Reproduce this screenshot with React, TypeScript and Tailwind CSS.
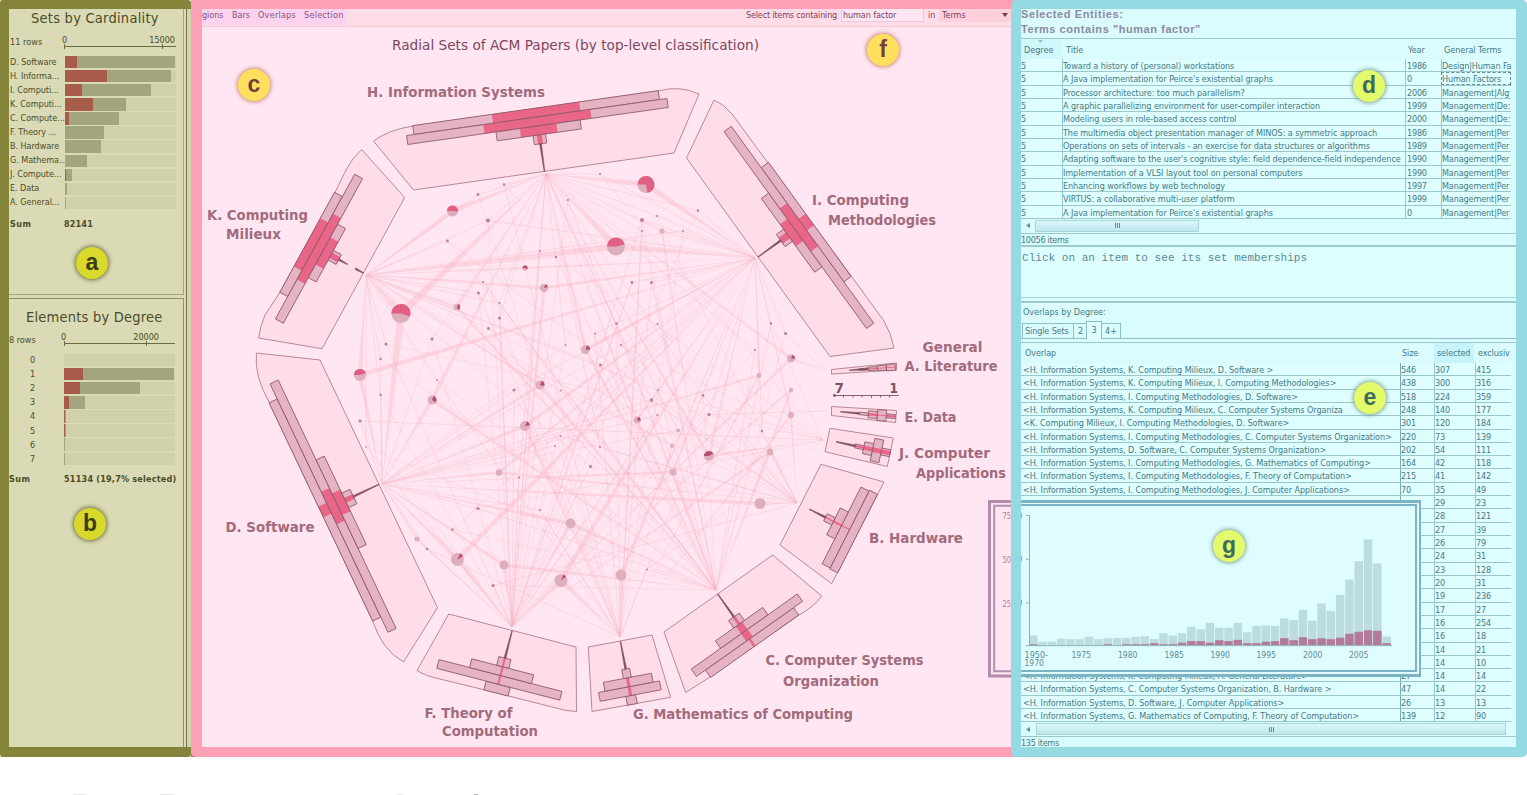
import React from 'react';

type Bin = [length: number, selected: number];
type Sector = {
  id: string;
  x: number;
  y: number;
  angle: number;
  outline: string;
  bins: Bin[];
  stem: [from: number, to: number][];
};

const SECTORS: Sector[] = [
  { id: 'H', x: 544.5, y: 171.5, angle: -8.1, outline: 'M373.5 141Q388 130 413 126L658 91Q680 85 699 94L674 153L413.5 190Z', bins: [[248, 88], [263, 108], [85, 37], [12.5, 5]], stem: [[0, 28]] },
  { id: 'I', x: 758, y: 257, angle: 54.1, outline: 'M714 100Q724 104 732 114L768 163L852 277L884 321Q891 333 894 348L830 356.5L686.5 158Z', bins: [[141, 14], [243, 53], [91, 27], [15, 7]], stem: [[0, 28]] },
  { id: 'K', x: 363.3, y: 273, angle: -61.3, outline: 'M361.7 149.5Q352 158 346 170L334.7 193L279.5 293L265 315Q260 327 258.5 338L322 348.7L404.7 197.5Z', bins: [[114, 55], [165, 75], [61, 31], [11, 6]], stem: [[0, 9], [18, 28]] },
  { id: 'D', x: 378.7, y: 484.5, angle: -115.4, outline: 'M256.4 353Q254 376 269.4 402.7L372.7 621Q382 650 403.5 662L437.5 607.7L320 360Z', bins: [[241.5, 12], [275, 36], [98, 24], [16, 5]], stem: [[0, 28]] },
  { id: 'F', x: 512, y: 631, angle: 194.5, outline: 'M448.7 614L417 670.5Q425 676 440 679L485 690L566 710.5L576.5 711.5L576 647Z', bins: [[25, 0], [127, 2], [64, 2], [12.5, 2]], stem: [[0, 28]] },
  { id: 'G', x: 620.5, y: 641.5, angle: 169.3, outline: 'M588.3 647L592 711.5L670.7 697.3L652 635Z', bins: [[10, 0], [62, 3], [49, 3], [8, 0]], stem: [[0, 28]] },
  { id: 'C', x: 717.7, y: 594, angle: 144.7, outline: 'M664 632L685.7 692.5L710 677L799 615Q814 607 821.7 596L772.7 555Z', bins: [[108, 2.5], [130, 8], [58, 8], [13, 3]], stem: [[0, 28]] },
  { id: 'B', x: 800.5, y: 504.7, angle: 116.8, outline: 'M821 464.3L884 482L831.7 583.7L780 545Z', bins: [[88, 0], [86, 1], [30, 2], [8, 1.5]], stem: [[10, 28]] },
  { id: 'J', x: 827.5, y: 440, angle: 102, outline: 'M830 428.3L893.3 438L887.3 466.5L825 451.7Z', bins: [[7, 4], [23, 4.5], [12, 4], [4, 2]], stem: [[9, 28]] },
  { id: 'E', x: 831.5, y: 411, angle: 95, outline: 'M831.5 406.5L896.5 410.5L895.5 422.5L831.5 415.5Z', bins: [[4, 2], [11, 1], [7, 2.5], [2.5, 0]], stem: [[9, 28]] },
  { id: 'A', x: 831.5, y: 371.5, angle: 86, outline: 'M831.5 369.5L896.5 363L896.5 370L831.5 374Z', bins: [[6.5, 0.8], [5, 0.8], [3.5, 1], [1.5, 0]], stem: [[18, 36]] },
];

const TIP: Record<string, [number, number]> = {
  H: [546, 174], I: [755, 258], K: [366, 275], D: [382, 484], F: [512, 627],
  G: [620, 637], C: [716, 590], B: [797, 503], J: [823, 440], E: [826, 411], A: [826, 371],
};

/** x, y, radius, selected share, member sets, link width */
type Bubble = [number, number, number, number, string, number];

const BUBBLES: Bubble[] = [
  [646, 184.5, 8.5, 0.72, 'HI', 6],
  [616, 246.5, 9, 0.46, 'HKI', 7],
  [401, 313.5, 9.5, 0.55, 'KHD', 8],
  [360, 375, 6, 0.45, 'KDI', 4.5],
  [452.5, 211, 5.5, 0.52, 'HK', 5],
  [585.5, 349.5, 4.5, 0.2, 'HIC', 3.5],
  [544, 288, 4, 0.15, 'KIF', 3],
  [525, 268, 2.6, 0.6, 'KI', 2],
  [457, 307, 3.2, 0.4, 'KHC', 2.5],
  [432, 400, 4.5, 0.28, 'HDC', 3.5],
  [540, 385, 4.5, 0.22, 'KCD', 3],
  [525, 426, 5, 0.16, 'DIG', 3.5],
  [499, 472.5, 3.2, 0, 'DIB', 2.5],
  [457.5, 559.5, 6.5, 0.1, 'DFI', 5],
  [504, 565, 4.5, 0, 'FCD', 3.5],
  [570.5, 523.5, 5, 0, 'DCF', 4],
  [561, 580.5, 6.5, 0.08, 'FIG', 5],
  [621, 575, 5.5, 0, 'GI', 3.5],
  [760, 503.5, 5.5, 0, 'DB', 4],
  [709, 456, 5, 0.42, 'IHJ', 3],
  [637, 420, 3.5, 0.25, 'HCI', 2.5],
  [673, 472, 3.5, 0, 'DCI', 2.5],
  [770, 452, 3.4, 0, 'BCF', 2.5],
  [791, 358.5, 4, 0.2, 'HFA', 2.5],
  [791, 415, 3, 0, 'GIB', 2],
  [791, 390, 2.2, 0, 'FC', 2],
  [759, 375.5, 2.4, 0, 'IGD', 2],
  [417, 539, 2.5, 0, 'DF', 2],
  [662, 231, 2.6, 0, 'HIC', 1.8],
  [678, 430.5, 2, 0, 'HD', 1.2],
  [672, 446, 2, 0, 'KG', 1.2],
];

/** x, y, radius, member sets */
const DOTS: [number, number, number, string][] = [
  [488, 220.5, 2, 'KHI'], [642, 220, 2, 'IFG'], [478, 194.5, 1.4, 'HK'], [504, 184.5, 1.2, 'HG'],
  [568, 200, 1.1, 'HC'], [600, 174, 1.1, 'HI'], [447.5, 241, 1.4, 'KB'], [698, 210.5, 1.2, 'HI'],
  [642, 231, 1, 'HG'], [683, 231, 1, 'KI'], [657, 216, 1, 'HI'], [540, 251, 1, 'HF'],
  [556, 257, 1.2, 'KC'], [483, 282, 1, 'KC'], [478.5, 293, 1.5, 'KG'], [499.5, 303, 1, 'KHF'],
  [499.5, 318, 1.6, 'HF'], [488.5, 328.5, 1.4, 'KC'], [432, 339, 1.6, 'HD'], [386, 344, 1.5, 'KF'],
  [380.5, 359, 1.2, 'KD'], [380.5, 395, 1.2, 'KD'], [437, 380, 0.9, 'KG'], [514, 390, 1.5, 'DIF'],
  [560.5, 390.5, 1, 'KC'], [565.5, 345, 0.9, 'HD'], [595, 333.5, 1, 'GI'], [600.5, 365, 1.5, 'KB'],
  [632, 282.5, 1.4, 'IF'], [651.5, 282.5, 1.5, 'IG'], [616.5, 323.5, 1.2, 'HC'], [657.5, 324, 1, 'ID'],
  [621, 345, 1, 'HB'], [771, 323.5, 1.2, 'IC'], [785.5, 333.5, 1.5, 'IA'], [755, 350, 1, 'HC'],
  [703, 395.5, 1.3, 'HB'], [709, 414.5, 1.6, 'IFE'], [651.5, 400, 1.7, 'HCD'], [657.5, 415, 1, 'FD'],
  [658, 390, 0.9, 'KC'], [762, 431, 1.2, 'IB'], [360, 421, 1.6, 'DJ'], [366, 447, 0.8, 'KF'],
  [560.5, 436, 1, 'DB'], [590.5, 466.5, 1.6, 'KC'], [519, 477.5, 1.1, 'FH'], [478, 508.5, 1.6, 'DC'],
  [452.5, 529.5, 1.2, 'DI'], [427, 549, 1.3, 'DG'], [493, 585.5, 1.5, 'FB'], [540, 510, 1, 'DG'],
  [600, 447, 1, 'HF'], [555, 446, 0.9, 'DI'], [647, 569.5, 1, 'GC'],
];

const MINOR_SETS = ['F', 'C', 'G', 'B', 'F', 'J', 'C'];

const LABELS: [number, number, number, string][] = [
  [367, 97, 178, 'H. Information Systems'],
  [207, 219.5, 101, 'K. Computing'],
  [226, 239, 55, 'Milieux'],
  [812, 204.5, 97, 'I. Computing'],
  [828, 224.5, 108, 'Methodologies'],
  [922.5, 352, 60, 'General'],
  [904.5, 371, 93, 'A. Literature'],
  [904.5, 421.5, 52, 'E. Data'],
  [899, 458, 91, 'J. Computer'],
  [916, 478, 90, 'Applications'],
  [869, 543, 94, 'B. Hardware'],
  [225.5, 531.5, 89, 'D. Software'],
  [424.5, 718, 88, 'F. Theory of'],
  [442, 736, 96, 'Computation'],
  [633, 719, 220, 'G. Mathematics of Computing'],
  [765.5, 664.5, 158, 'C. Computer Systems'],
  [783, 685.5, 96, 'Organization'],
];

function wedge(tip: [number, number], x: number, y: number, width: number) {
  const dx = x - tip[0];
  const dy = y - tip[1];
  const d = Math.hypot(dx, dy) || 1;
  const ox = (-dy / d) * (width / 2);
  const oy = (dx / d) * (width / 2);
  return `M${tip[0]} ${tip[1]}L${x + ox} ${y + oy}L${x - ox} ${y - oy}Z`;
}

function slice(x: number, y: number, r: number, share: number) {
  const start = share > 0.4 ? -Math.PI : -Math.PI / 2 + 0.4;
  const end = start + share * Math.PI * 2;
  const large = share > 0.5 ? 1 : 0;
  return `M${x} ${y}L${x + r * Math.cos(start)} ${y + r * Math.sin(start)}A${r} ${r} 0 ${large} 1 ${x + r * Math.cos(end)} ${y + r * Math.sin(end)}Z`;
}

function SectorShape({ s }: { s: Sector }) {
  return (
    <g>
      <path d={s.outline} fill="#ffdde8" stroke="#b07d8b" strokeWidth="0.9" />
      <g transform={`translate(${s.x} ${s.y}) rotate(${s.angle})`}>
        {s.bins.map(([len, sel], i) => {
          const top = -64 + i * 9;
          return (
            <g key={i}>
              <rect x={-len / 2} y={top} width={len} height={9} fill="#e5b3c3" />
              {sel > 0 && <rect x={-sel / 2} y={top} width={sel} height={9} fill="#e96689" />}
              <rect x={-len / 2} y={top} width={len} height={9} fill="none" stroke="#8a5766" strokeWidth="0.8" />
            </g>
          );
        })}
        {s.stem.map(([a, b], i) => (
          <path key={i} d={`M-0.3 ${-a}L0.3 ${-a}L0.9 ${-b}L-0.9 ${-b}Z`} fill="#82505f" stroke="#82505f" strokeWidth="0.6" />
        ))}
      </g>
    </g>
  );
}

function RadialSets() {
  return (
    <svg className="block h-[720px] w-[809px] shrink-0" viewBox="202 27 809 720" fontFamily="'DejaVu Sans', sans-serif">
      <text x="392" y="50" fontSize="14" textLength="367" lengthAdjust="spacingAndGlyphs" fill="#7d4760">
        Radial Sets of ACM Papers (by top-level classification)
      </text>
      <g fill="#fbb9c5">
        {BUBBLES.map(([x, y, , , sets, w]) =>
          sets.split('').map((k) => <path key={`${x}${y}${k}`} d={wedge(TIP[k], x, y, w)} opacity="0.42" />),
        )}
      </g>
      <g stroke="#f9b3c0" strokeWidth="0.8">
        {DOTS.map(([x, y, , sets], i) =>
          (sets + MINOR_SETS[i % MINOR_SETS.length]).split('').map((k, j) => (
            <line key={`${x}-${y}-${j}`} x1={TIP[k][0]} y1={TIP[k][1]} x2={x} y2={y} opacity={j === sets.length ? 0.3 : 0.42} />
          )),
        )}
      </g>
      {DOTS.map(([x, y, r]) => (
        <circle key={`${x}-${y}`} cx={x} cy={y} r={r} fill="#b9809a" />
      ))}
      {BUBBLES.map(([x, y, r, share]) => (
        <g key={`${x}-${y}`}>
          <circle cx={x} cy={y} r={r} fill="#dfaebd" />
          {share > 0 && <path d={slice(x, y, r, share)} fill={r > 5 && share > 0.2 ? '#e05f82' : '#b84f70'} />}
        </g>
      ))}
      {SECTORS.map((s) => (
        <SectorShape key={s.id} s={s} />
      ))}
      <g fill="#a26b7b" fontSize="14" fontWeight="bold">
        {LABELS.map(([x, y, w, t]) => (
          <text key={t} x={x} y={y} textLength={w} lengthAdjust="spacingAndGlyphs">
            {t}
          </text>
        ))}
      </g>
      <g fill="#82505f" fontSize="14.5" fontWeight="bold">
        <text x="834.5" y="392.5" textLength="9.5" lengthAdjust="spacingAndGlyphs">7</text>
        <text x="889.5" y="392.5" textLength="8.5" lengthAdjust="spacingAndGlyphs">1</text>
      </g>
      <path d="M834 395.5H899M843.5 395v2.5M853 395v2.5M862 395v2.5M871.500 395v3M880.500 395v2.500M889.500 395v2.500" stroke="#82505f" strokeWidth="0.9" />
      <circle cx="834.5" cy="395.5" r="1.4" fill="#82505f" />
      <path d="M1012 501.500H989.500V676H1012" fill="none" stroke="#b48cad" strokeWidth="3" />
      <path d="M1012 505.700H994.200V671.300H1012" fill="none" stroke="#b48cad" strokeWidth="2" />
      <g fill="#bb7795" fontSize="8">
        <text x="1002.500" y="519" textLength="8.500" lengthAdjust="spacingAndGlyphs">75</text>
        <text x="1002.500" y="562.500" textLength="8.500" lengthAdjust="spacingAndGlyphs">50</text>
        <text x="1002.500" y="606.500" textLength="8.500" lengthAdjust="spacingAndGlyphs">25</text>
      </g>
    </svg>
  );
}

function Badge({ letter, place, tone }: { letter: string; place: string; tone: string }) {
  return (
    <div className={`absolute flex h-8 w-8 items-center justify-center rounded-full pb-0.5 font-['Liberation_Sans',sans-serif] text-[23px] leading-none font-bold ${place} ${tone}`}>
      {letter}
    </div>
  );
}

const OLIVE_BADGE = 'bg-[#d9d92b] text-[#3d3d12] shadow-[0_0_4px_1px_#6d6e3c]';
const PINK_BADGE = 'bg-[#ffdf5e] text-[#733f3c] shadow-[0_0_4px_1px_#c98b78]';
const BLUE_BADGE = 'bg-[#e2fa6c] text-[#3c6a5d] shadow-[0_0_4px_1px_#7fa08f]';

const CARDINALITY: [string, number, number][] = [
  ['D. Software', 110, 12], ['H. Informa...', 106.5, 42], ['I. Computi...', 86.5, 17], ['K. Computi...', 61.5, 28.5],
  ['C. Compute...', 54, 4], ['F. Theory ...', 39.5, 0.8], ['B. Hardware', 37, 0.8], ['G. Mathema...', 22.5, 0.8],
  ['J. Compute...', 7.5, 1], ['E. Data', 2, 0.5], ['A. General...', 1.5, 0.7],
];

const DEGREES: [string, number, number][] = [
  ['0', 0, 0], ['1', 110, 19], ['2', 76, 16], ['3', 21, 5], ['4', 1.8, 0.6], ['5', 1, 0.6], ['6', 0.8, 0], ['7', 0.8, 0],
];

function Bar({ total, selected }: { total: number; selected: number }) {
  return (
    <div className="flex h-[12.400px] w-[111px] shrink-0 bg-[#d0d1ab]">
      <div className="h-full bg-[#a95b49]" style={{ width: selected }} />
      <div className="h-full bg-[#a3a57f]" style={{ width: total - selected }} />
    </div>
  );
}

function LeftPanel() {
  return (
    <aside className="relative flex h-[757px] w-[191px] shrink-0 flex-col overflow-hidden rounded-[3px] border-y-[9px] border-b-[10px] border-l-[9px] border-[#84853a] bg-[#dadbb6] font-['DejaVu_Sans_Condensed','DejaVu_Sans',sans-serif] text-[9px] leading-none text-[#4b4c26]">
      <div className="flex min-h-0 flex-1">
        <div className="flex w-[175px] shrink-0 flex-col">
          <section className="flex h-[286px] shrink-0 flex-col border-r border-b border-[#a4a67c]">
            <h2 className="mt-px ml-[22px] h-[16px] text-[14.500px] leading-[16px] tracking-[0.250px] whitespace-nowrap">Sets by Cardinality</h2>
            <div className="mt-[10px] flex h-[20px]">
              <div className="w-[55px] pt-[2px] pl-px tracking-[0.050px]">11 rows</div>
              <div className="relative h-[11px] w-[112px] border-b border-[#6a6b42]">
                <div className="absolute bottom-px left-[-2px]">0</div>
                <div className="absolute right-[1px] bottom-px text-[9px]">15000</div>
                <div className="absolute bottom-[-3px] left-0 h-[5px] w-px bg-[#6a6b42]" />
                <div className="absolute right-[13px] bottom-[-3px] h-[5px] w-px bg-[#6a6b42]" />
              </div>
            </div>
            <div className="-mt-px flex flex-col">
              {CARDINALITY.map(([name, total, selected]) => (
                <div key={name} className="flex h-[14.100px] items-center">
                  <div className="w-[55.500px] shrink-0 pl-px tracking-[-0.060px] whitespace-nowrap">{name}</div>
                  <Bar total={total} selected={selected} />
                </div>
              ))}
            </div>
            <div className="mt-[10px] flex pl-px font-bold">
              <div className="w-[54px] tracking-[0.400px]">Sum</div>
              <div className="tracking-[0.150px]">82141</div>
            </div>
          </section>
          <section className="mt-[3px] flex min-h-0 flex-1 flex-col border-t border-r border-[#8f9168]">
            <h2 className="mt-[10px] ml-[17px] h-[16px] text-[14.500px] leading-[16px] tracking-[0.220px] whitespace-nowrap">Elements by Degree</h2>
            <div className="mt-[8px] flex h-[20px]">
              <div className="w-[55px] pt-[3px]">8 rows</div>
              <div className="relative h-[11px] w-[111px] border-b border-[#6a6b42]">
                <div className="absolute bottom-px left-[-3px]">0</div>
                <div className="absolute right-[16px] bottom-px">20000</div>
                <div className="absolute bottom-[-3px] left-0 h-[5px] w-px bg-[#6a6b42]" />
                <div className="absolute right-[28px] bottom-[-3px] h-[5px] w-px bg-[#6a6b42]" />
              </div>
            </div>
            <div className="flex flex-col">
              {DEGREES.map(([name, total, selected]) => (
                <div key={name} className="flex h-[14.100px] items-center">
                  <div className="w-[55px] shrink-0 pt-px pl-[21px]">{name}</div>
                  <Bar total={total} selected={selected} />
                </div>
              ))}
            </div>
            <div className="mt-[9px] flex font-bold whitespace-nowrap">
              <div className="w-[55px] tracking-[0.400px]">Sum</div>
              <div className="tracking-[0.210px]">51134 (19,7% selected)</div>
            </div>
          </section>
        </div>
        <div className="ml-[2px] w-px bg-[#74764c]" />
        <div className="flex-1 bg-[#d5d3ae]" />
      </div>
      <Badge letter="a" place="left-[67px] top-[238px]" tone={OLIVE_BADGE} />
      <Badge letter="b" place="left-[65px] top-[499px]" tone={OLIVE_BADGE} />
    </aside>
  );
}

function CenterPanel() {
  return (
    <div className="flex h-[757px] w-[820px] shrink-0 bg-[#84853a]">
      <main className="relative flex h-[757px] w-[820px] flex-col overflow-hidden rounded-bl-[5px] border-t-[9px] border-b-[10px] border-l-[11px] border-[#fca0b6] bg-[#ffe6f2] font-['DejaVu_Sans_Condensed','DejaVu_Sans',sans-serif] text-[9px] leading-none text-[#7a4560]">
        <div className="flex h-[18px] shrink-0 border-b border-[#fdc8d4] bg-[#ffdde8]">
          <nav className="flex h-[16px] w-[145px] shrink-0 bg-[#fcd3ee] leading-[12px] tracking-[-0.050px] text-[#875180]">
            <span className="w-[30px]">gions</span>
            <span className="w-[26px]">Bars</span>
            <span className="w-[46px] tracking-[0.250px]">Overlaps</span>
            <span className="tracking-[0.250px]">Selection</span>
          </nav>
          <form className="ml-auto flex leading-[12px] whitespace-nowrap">
            <label className="w-[95px] tracking-[-0.180px]">Select items containing</label>
            <span className="h-[13px] w-[83px] border-r border-b border-l border-[#efc6dc] bg-[#ffe6f2] pl-px tracking-[-0.100px]">human factor</span>
            <span className="w-[15px] pl-1">in</span>
            <span className="flex h-[13px] w-[72px] justify-between bg-[#fdd0dc] pr-[3px] pl-[3px]">
              Terms
              <svg className="mt-1 h-[4px] w-[6px]" viewBox="0 0 6 4"><path d="M0 0H6L3 4Z" fill="#6b3a50" /></svg>
            </span>
          </form>
        </div>
        <RadialSets />
        <Badge letter="c" place="left-[36px] top-[60px]" tone={PINK_BADGE} />
        <Badge letter="f" place="left-[665px] top-[25px]" tone={PINK_BADGE} />
      </main>
    </div>
  );
}

const ENTITIES: [string, string, string][] = [
  ['Toward a history of (personal) workstations', '1986', 'Design|Human Fa'],
  ["A Java implementation for Peirce's existential graphs", '0', 'Human Factors'],
  ['Processor architecture: too much parallelism?', '2006', 'Management|Alg'],
  ['A graphic parallelizing environment for user-compiler interaction', '1999', 'Management|De:'],
  ['Modeling users in role-based access control', '2000', 'Management|De:'],
  ['The multimedia object presentation manager of MINOS: a symmetric approach', '1986', 'Management|Per'],
  ['Operations on sets of intervals - an exercise for data structures or algorithms', '1989', 'Management|Per'],
  ["Adapting software to the user's cognitive style: field dependence-field independence", '1990', 'Management|Per'],
  ['Implementation of a VLSI layout tool on personal computers', '1990', 'Management|Per'],
  ['Enhancing workflows by web technology', '1997', 'Management|Per'],
  ['VIRTUS: a collaborative multi-user platform', '1999', 'Management|Per'],
  ["A Java implementation for Peirce's existential graphs", '0', 'Management|Per'],
];

const OVERLAPS: [string, string, string, string][] = [
  ['<H. Information Systems, K. Computing Milieux, D. Software >', '546', '307', '415'],
  ['<H. Information Systems, K. Computing Milieux, I. Computing Methodologies>', '438', '300', '316'],
  ['<H. Information Systems, I. Computing Methodologies, D. Software>', '518', '224', '359'],
  ['<H. Information Systems, K. Computing Milieux, C. Computer Systems Organiza', '248', '140', '177'],
  ['<K. Computing Milieux, I. Computing Methodologies, D. Software>', '301', '120', '184'],
  ['<H. Information Systems, I. Computing Methodologies, C. Computer Systems Organization>', '220', '73', '139'],
  ['<H. Information Systems, D. Software, C. Computer Systems Organization>', '202', '54', '111'],
  ['<H. Information Systems, I. Computing Methodologies, G. Mathematics of Computing>', '164', '42', '118'],
  ['<H. Information Systems, I. Computing Methodologies, F. Theory of Computation>', '215', '41', '142'],
  ['<H. Information Systems, I. Computing Methodologies, J. Computer Applications>', '70', '35', '49'],
  ['', '', '29', '23'], ['', '', '28', '121'], ['', '', '27', '39'], ['', '', '26', '79'], ['', '', '24', '31'],
  ['', '', '23', '128'], ['', '', '20', '31'], ['', '', '19', '236'], ['', '', '17', '27'], ['', '', '16', '254'],
  ['', '', '16', '18'], ['', '', '14', '21'], ['', '', '14', '10'],
  ['<H. Information Systems, K. Computing Milieux, A. General Literature>', '27', '14', '14'],
  ['<H. Information Systems, C. Computer Systems Organization, B. Hardware >', '47', '14', '22'],
  ['<H. Information Systems, D. Software, J. Computer Applications>', '26', '13', '13'],
  ['<H. Information Systems, G. Mathematics of Computing, F. Theory of Computation>', '139', '12', '90'],
];

/** total and selected bar heights per period */
const YEARS: [number, number][] = [
  [9.7, 1], [3.5, 0], [3.5, 0], [6.5, 0], [6, 0], [6, 0], [8.5, 0], [6, 0], [7, 1], [7.3, 0], [7.3, 1], [8.3, 1], [9, 1],
  [6.3, 2], [12, 1], [9.7, 1], [12, 2.5], [18.5, 4], [16, 4], [22.5, 2.5], [17.5, 5], [17.5, 4], [22.5, 5.3], [13, 2],
  [19.3, 2], [19.7, 3.5], [19.3, 4], [27, 7], [25.3, 5], [35.5, 8], [24.7, 6], [42, 7], [34.5, 6], [50.5, 7.5],
  [66, 11.5], [84.5, 13.5], [106.3, 15], [82.3, 14.5], [8.7, 2],
];

const YEAR_TICKS: [number, string][] = [
  [1071.5, '1975'], [1118, '1980'], [1164.5, '1985'], [1210.5, '1990'], [1256.5, '1995'], [1303, '2000'], [1349, '2005'],
];

function TimeChart() {
  return (
    <div className="absolute top-[491px] left-0 h-[177px] w-[399.500px] border-y-[3px] border-r-[2.500px] border-[#7cb2c3] bg-[#dffdfe] pt-px pr-[2px] pb-[2px]">
      <div className="h-full w-full border-y-2 border-r-2 border-[#7cb2c3]">
        <svg className="block h-full w-full" viewBox="1021 506 393.500 165" preserveAspectRatio="none" fontFamily="'DejaVu Sans Condensed', 'DejaVu Sans', sans-serif" fontSize="8.500" fill="#5b8b97">
          {YEARS.map(([h, s], i) => (
            <g key={i}>
              <rect x={1029 + i * 9.3} y={646 - h} width="8.500" height={h} fill="#bddce2" />
              <rect x={1029 + i * 9.3} y={646 - s} width="8.500" height={s} fill="#b27b9b" />
            </g>
          ))}
          <path d="M1029.500 515.500V646.500M1026 515.500H1030M1026 559.500H1030M1026 603.500H1030M1026 646.500H1392" stroke="#8ab0ba" fill="none" />
          <text x="1017.500" y="519">0</text>
          <text x="1017.500" y="562.500">0</text>
          <text x="1017.500" y="606.500">0</text>
          <text x="1024.500" y="659" textLength="23.500" lengthAdjust="spacingAndGlyphs">1950-</text>
          <text x="1024.500" y="666.500" textLength="19.500" lengthAdjust="spacingAndGlyphs">1970</text>
          {YEAR_TICKS.map(([x, t]) => (
            <text key={t} x={x} y="659" textLength="19.500" lengthAdjust="spacingAndGlyphs">{t}</text>
          ))}
        </svg>
      </div>
    </div>
  );
}

function ScrollBar({ thumb, left }: { thumb: string; left: string }) {
  return (
    <div className="flex h-[14px] shrink-0 items-center">
      <svg className="ml-[5px] h-[5px] w-[4px]" viewBox="0 0 4 5"><path d="M4 0V5L0 2.500Z" fill="#5d9199" /></svg>
      <div className={`flex h-[12px] items-center justify-center gap-px border border-[#a9d5dc] bg-linear-to-b from-[#daf8fb] to-[#bfe5ea] ${left} ${thumb}`}>
        <i className="h-[5px] w-px bg-[#5d9199]" />
        <i className="h-[5px] w-px bg-[#5d9199]" />
        <i className="h-[5px] w-px bg-[#5d9199]" />
      </div>
    </div>
  );
}

function RightPanel() {
  return (
    <div className="h-[757px] w-[516px] shrink-0 rounded-r-[5px] bg-[#fca0b6]">
      <aside className="relative flex h-[757px] w-[516px] flex-col overflow-hidden rounded-[5px] border-t-[9px] border-r-[11px] border-b-[10px] border-l-[10px] border-[#95d9e2] bg-[#dafcff] font-['DejaVu_Sans_Condensed','DejaVu_Sans',sans-serif] text-[9px] leading-none whitespace-nowrap text-[#467a85]">
        <header className="h-[30px] shrink-0 border-b border-[#9dc9d0] font-['Liberation_Sans',sans-serif] text-[11px] font-bold text-[#8c8aa2]">
          <div className="h-[11px] leading-[10px] tracking-[0.600px]">Selected Entities:</div>
          <div className="leading-[18px] tracking-[0.560px]">Terms contains "human factor"</div>
        </header>

        <div className="relative flex h-[20px] shrink-0 items-center pt-[2px]">
          <div className="-mt-[2px] flex h-[20px] w-[41px] items-center bg-[#d0f7fc] pt-[2px] pl-[3px]">Degree</div>
          <div className="w-[343px] pl-[4px]">Title</div>
          <div className="w-[36px] pl-[3px] tracking-[-0.100px]">Year</div>
          <div className="pl-[3px] tracking-[-0.050px]">General Terms</div>
          <svg className="absolute top-[1px] left-[17px] h-[3px] w-[5px]" viewBox="0 0 5 3"><path d="M0 0H5L2.500 3Z" fill="#93c4cd" /></svg>
        </div>
        <div className="flex w-[490px] shrink-0 flex-col bg-[#dffeff]">
          {ENTITIES.map(([title, year, terms], i) => (
            <div key={i} className="flex h-[13.340px] border-b border-[#98c8ce] leading-[14px]">
              <div className="w-[41px] shrink-0">5</div>
              <div className="w-[343px] shrink-0 border-l border-[#98c8ce] tracking-[-0.080px]">{title}</div>
              <div className="w-[36px] shrink-0 border-l border-[#98c8ce] pl-px tracking-[-0.200px]">{year}</div>
              <div className={`min-w-0 flex-1 border-l tracking-[-0.120px] ${i === 1 ? 'border border-dashed border-[#5d9199] leading-[12px]' : 'border-[#98c8ce]'}`}>{terms}</div>
            </div>
          ))}
        </div>
        <ScrollBar left="ml-[5px]" thumb="w-[164px]" />
        <div className="h-[14px] shrink-0 border-t border-b-2 border-[#9dc9d0] leading-[13px] tracking-[-0.300px]">10056 items</div>
        <div className="h-[51px] shrink-0 border-b border-[#aad3d8] bg-[#dffeff] pt-[5px] pl-px font-['Liberation_Mono',monospace] text-[11px] leading-[13px] tracking-[0.030px] text-[#578b95]">
          Click on an item to see its set memberships
        </div>
        <div className="mt-[3px] h-[20px] shrink-0 border-t-2 border-[#9dc9d0] pt-[5px] pl-[2px] tracking-[-0.030px]">Overlaps by Degree:</div>
        <div className="flex h-[18px] shrink-0 items-end border-b border-[#8dbec6] pl-px tracking-[-0.050px]">
          <div className="flex h-[15px] w-[52px] items-center border-t border-r border-l border-[#8dbec6] pt-[2px] pl-[2px] tracking-[-0.120px]">Single Sets</div>
          <div className="flex h-[15px] w-[12px] items-center border-t border-[#8dbec6] pt-[2px] pl-[4px]">2</div>
          <div className="-mb-px flex h-[18px] w-[16px] items-center justify-center border-x border-t border-[#8dbec6] bg-[#dffeff]">3</div>
          <div className="flex h-[15px] w-[19px] items-center justify-center border-t border-r border-[#8dbec6] pt-[2px]">4+</div>
        </div>

        <div className="mt-[3px] flex h-[21px] shrink-0 items-center border-t border-[#9dc9d0] tracking-[-0.100px]">
          <div className="w-[379px] pt-[2px] pl-[4px]">Overlap</div>
          <div className="w-[34px] pt-[2px] pl-[2px]">Size</div>
          <div className="flex h-full w-[40px] items-center bg-[#c6f4fa] pt-[2px] pl-[3px]">selected</div>
          <div className="w-[38px] pt-[2px] pl-[4px]">exclusiv</div>
        </div>
        <div className="flex w-[490px] shrink-0 flex-col bg-[#dffeff]">
          {OVERLAPS.map(([name, size, selected, exclusive], i) => (
            <div key={i} className="flex h-[13.320px] border-b border-[#98c8ce] leading-[14px] tracking-[-0.200px]">
              <div className="w-[379px] shrink-0 pl-[2px] tracking-[-0.070px]">{name}</div>
              <div className="w-[34px] shrink-0 border-l border-[#78aab2]">{size}</div>
              <div className="w-[41px] shrink-0 border-l border-[#98c8ce]">{selected}</div>
              <div className="border-l border-[#98c8ce]">{exclusive}</div>
            </div>
          ))}
        </div>
        <ScrollBar left="ml-[6px]" thumb="w-[470px]" />
        <div className="border-t border-[#9dc9d0] pt-px leading-[10px] tracking-[-0.300px]">135 items</div>

        <TimeChart />
        <Badge letter="d" place="left-[332px] top-[61px]" tone={BLUE_BADGE} />
        <Badge letter="e" place="left-[333px] top-[373px]" tone={BLUE_BADGE} />
        <Badge letter="g" place="left-[192px] top-[521px]" tone={BLUE_BADGE} />
      </aside>
    </div>
  );
}

export default function App() {
  return (
    <div className="h-[795px] w-[1527px] overflow-hidden bg-white">
      <div className="flex">
        <LeftPanel />
        <CenterPanel />
        <RightPanel />
      </div>
      <div className="flex h-[38px] items-end pl-[73px]">
        <div className="h-px w-[12px] bg-[#e6e6e6]" />
        <div className="ml-[75px] h-px w-[13px] bg-[#e6e6e6]" />
        <div className="ml-[224px] h-px w-[6px] bg-[#e6e6e6]" />
        <div className="ml-[71px] h-px w-[4px] bg-[#b5b5b5]" />
      </div>
    </div>
  );
}
